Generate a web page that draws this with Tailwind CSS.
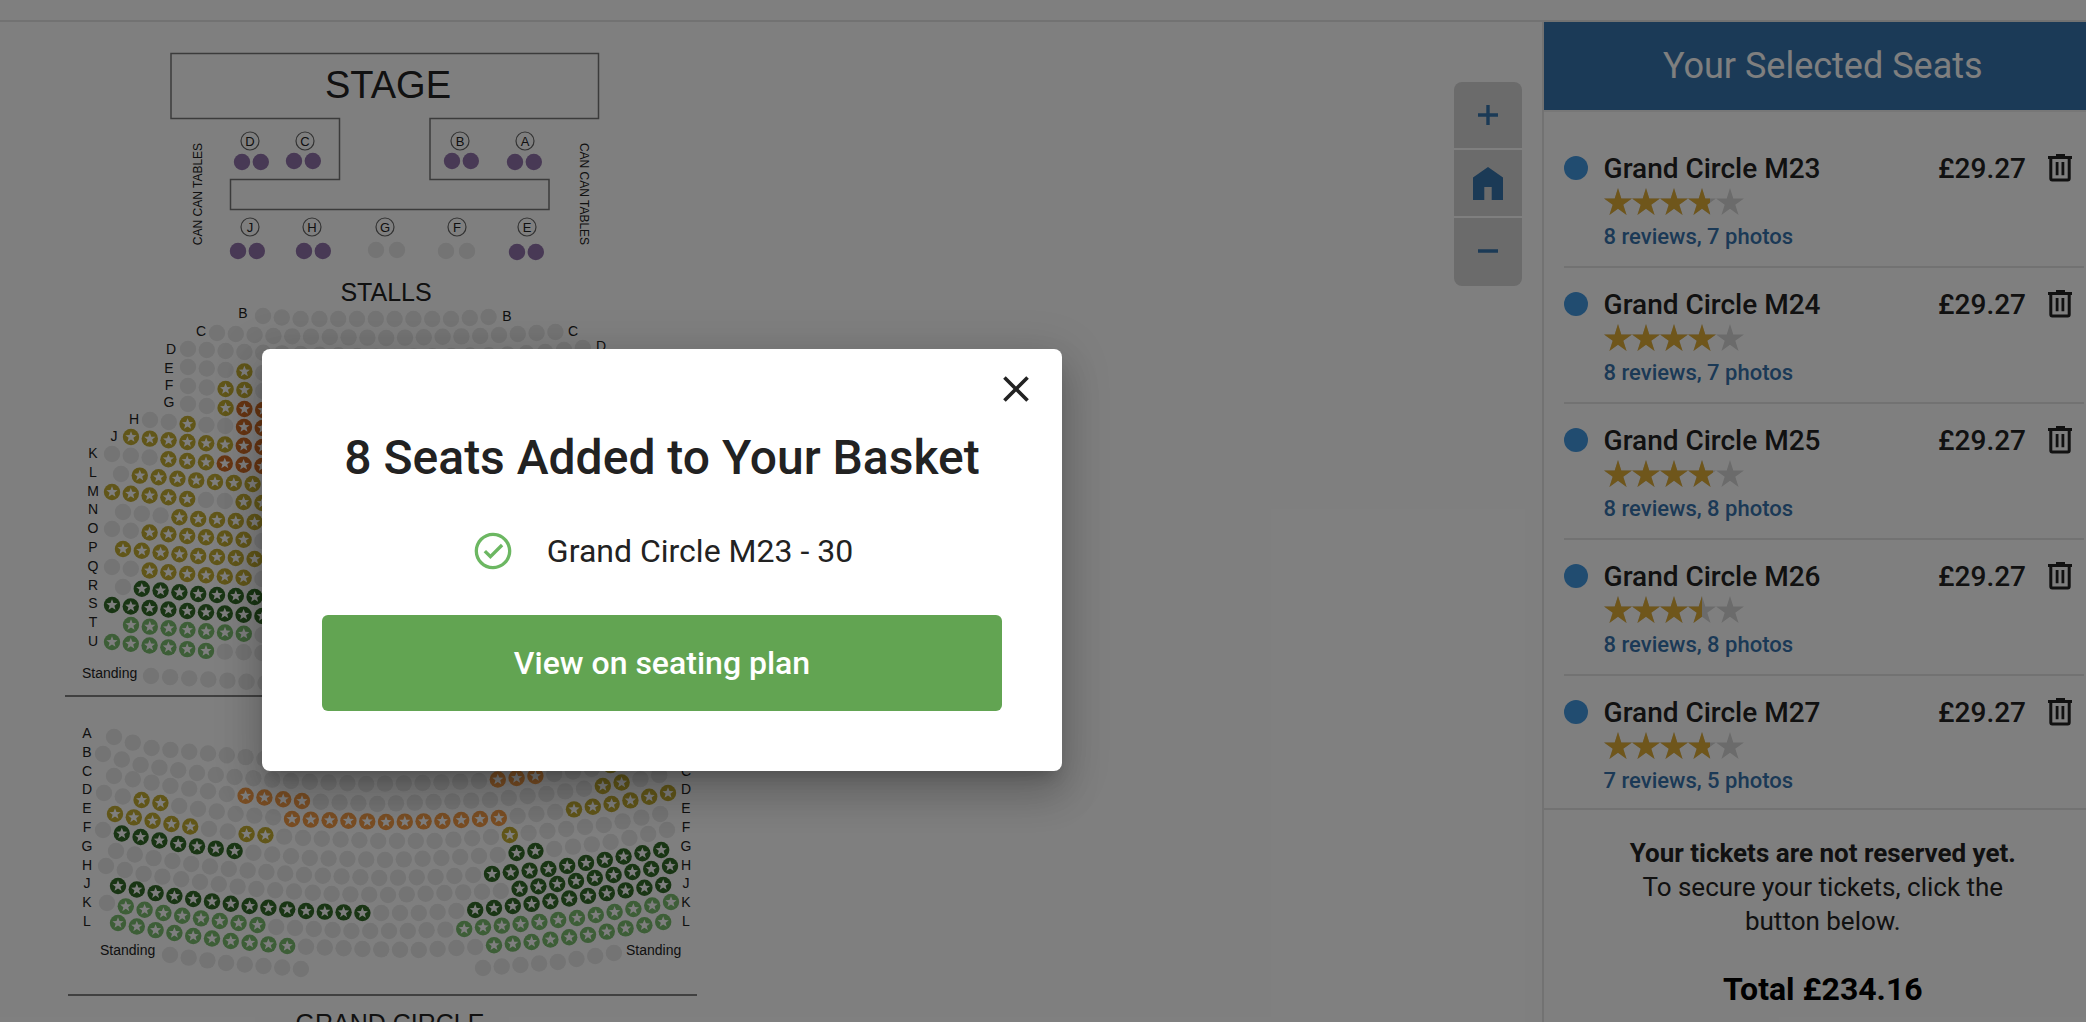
<!DOCTYPE html>
<html lang="en">
<head>
<meta charset="utf-8">
<title>Choose your seats</title>
<script src="https://cdn.jsdelivr.net/npm/@tailwindcss/browser@4"></script>
</head>
<body class="relative h-screen overflow-hidden bg-white font-['Roboto',sans-serif] text-[#222222]">

<svg class="hidden" aria-hidden="true">
  <symbol id="star" viewBox="0 0 28 28"><path d="M14 0l3.300 10.400H28l-8.700 6.300L22.600 27 14 20.700 5.400 27l3.300-10.300L0 10.400h10.700z"/></symbol>
  <symbol id="trash" viewBox="0 0 24 28"><path d="M8 0h9v2h7v3H0V2h8z"/><path d="M2.800 5v19.500q0 1.500 1.500 1.500h15.400q1.500 0 1.500-1.500V5" fill="none" stroke="currentColor" stroke-width="3"/><path d="M7.700 8h2.800v13.300H7.700zM13.500 8h2.800v13.300h-2.800z"/></symbol>
</svg>

<div class="flex h-full flex-col">
  <header class="h-[22px] shrink-0 border-b-2 border-[#e4e4e4]"></header>
  <div class="flex min-h-0 flex-1">

    <main class="relative min-w-0 flex-1 overflow-hidden">
      <svg id="plan" class="h-[1020px] w-[720px] font-['Liberation_Sans',sans-serif] text-sm" viewBox="0 22 720 1020" fill="#222222" role="img" aria-label="Seating plan">
        <path d="M171 53.500H598.500V118.500H430V179.500H549V209.500H230.500V179.500H339.500V118.500H171Z" fill="none" stroke="#777777" stroke-width="1.500"/>
        <path d="M65 696H695M68 995H697" stroke="#808080" stroke-width="2"/>
        <text x="388" y="98" text-anchor="middle" class="text-[38px]">STAGE</text>
        <text x="386" y="301" text-anchor="middle" class="text-[25px]">STALLS</text>
        <text x="390" y="1032" text-anchor="middle" class="text-[25px]">GRAND CIRCLE</text>
        <text transform="translate(202 194) rotate(-90)" text-anchor="middle" class="text-xs">CAN CAN TABLES</text>
        <text transform="translate(580 194) rotate(90)" text-anchor="middle" class="text-xs">CAN CAN TABLES</text>
        <text x="82" y="678">Standing</text>
        <text x="100" y="955">Standing</text>
        <text x="626" y="955">Standing</text>
      </svg>

      <div class="absolute right-5 top-[60px] flex w-[68px] flex-col gap-0.5 overflow-hidden rounded-lg text-[#3674ac]">
        <button aria-label="Zoom in" class="flex h-[66px] items-center justify-center bg-[#d6d6d6]"><svg width="20" height="20" fill="currentColor"><path d="M8.300 0h3.400v8.300H20v3.400h-8.300V20H8.300v-8.300H0V8.300h8.300z"/></svg></button>
        <button aria-label="Reset view" class="flex h-[66px] items-center justify-center bg-[#d6d6d6]"><svg width="30" height="33" fill="currentColor"><path d="M15 0L30 10.500V33H18.700V20H11.300V33H0V10.500z"/></svg></button>
        <button aria-label="Zoom out" class="flex h-[68px] items-center justify-center bg-[#d6d6d6]"><svg width="20" height="20" fill="currentColor"><path d="M0 7.300h20v3.400H0z"/></svg></button>
      </div>
    </main>

    <aside class="flex w-[26.1%] min-w-[480px] flex-col border-l-2 border-[#e4e4e4]">
      <h2 class="flex h-[90px] shrink-0 items-center justify-center border-b-2 border-[#eeeeee] bg-[#3674ae] bg-clip-padding pl-4 text-4xl text-white">Your Selected Seats</h2>
      <ul id="seats" class="h-[696px] shrink-0 overflow-hidden pl-5 pr-0.5 pt-5"></ul>
      <div class="border-t-2 border-[#e4e4e4] pl-[72px] pr-14 pt-[26px] text-center text-[26px] leading-[34px]">
        <p><strong class="font-bold">Your tickets are not reserved yet.</strong><br>To secure your tickets, click the button below.</p>
        <p class="mt-8 text-[32px] font-bold leading-[38px] text-black">Total £234.16</p>
      </div>
    </aside>
  </div>
</div>

<div class="absolute inset-0 bg-black/50 pl-[262px] pt-[349px]">
  <section role="dialog" aria-modal="true" aria-labelledby="dialog-title" class="relative w-[800px] rounded-lg bg-white px-[60px] pb-[60px] pt-20 text-center shadow-[0_11px_15px_-7px_rgba(0,0,0,0.2),0_24px_38px_3px_rgba(0,0,0,0.14),0_9px_46px_8px_rgba(0,0,0,0.12)]">
    <button aria-label="Close" class="absolute right-6 top-[18px]"><svg class="size-11" viewBox="0 0 24 24" fill="currentColor"><path d="M19 6.410 17.590 5 12 10.590 6.410 5 5 6.410 10.590 12 5 17.590 6.410 19 12 13.410 17.590 19 19 17.590 13.410 12z"/></svg></button>
    <h1 id="dialog-title" class="text-5xl/[58px] font-medium">8 Seats Added to Your Basket</h1>
    <p class="mt-[42px] flex h-11 items-center justify-center gap-8 text-[32px]">
      <svg class="size-11" viewBox="0 0 24 24" fill="#6cb762" aria-hidden="true"><path d="M12 2C6.480 2 2 6.480 2 12s4.480 10 10 10 10-4.480 10-10S17.520 2 12 2zm0 18.200c-4.520 0-8.200-3.680-8.200-8.200S7.480 3.800 12 3.800s8.200 3.680 8.200 8.200-3.680 8.200-8.200 8.200zM16.300 8.100l-5.700 5.700-2.400-2.400-1.300 1.300 3.700 3.600 7-6.900z"/></svg>
      <span>Grand Circle M23 - 30</span>
    </p>
    <button class="mt-[42px] h-24 w-full rounded-md bg-[#62a452] text-[32px] font-medium text-white">View on seating plan</button>
  </section>
</div>

<script>
const basket = [
  ['M23', '8 reviews, 7 photos', 76], ['M24', '8 reviews, 7 photos', 80],
  ['M25', '8 reviews, 8 photos', 78], ['M26', '8 reviews, 8 photos', 70],
  ['M27', '7 reviews, 5 photos', 76]
];
const five = '<svg class="size-7 shrink-0"><use href="#star"/></svg>'.repeat(5);
document.getElementById('seats').innerHTML = basket.map(([seat, reviews, score]) => `
  <li class="flex h-[136px] items-start border-b-2 border-[#e4e4e4] pt-5">
    <span class="mt-1 size-6 shrink-0 rounded-full bg-[#4398e0]"></span>
    <div class="ml-4 flex-1">
      <h3 class="text-[28px] font-medium leading-[34px]">Grand Circle ${seat}</h3>
      <div class="relative mt-0.5 w-[140px] fill-[#d6d6d6]" role="img" aria-label="Rating ${score}%">
        <div class="flex">${five}</div>
        <div class="absolute inset-y-0 left-0 flex overflow-hidden fill-[#dfac36]" style="width:${score}%">${five}</div>
      </div>
      <a href="#" class="mt-1.5 block text-[22px] font-medium leading-[30px] text-[#3672ac]">${reviews}</a>
    </div>
    <span class="text-[28px] font-medium leading-[34px]">£29.27</span>
    <button aria-label="Remove seat ${seat}" class="ml-[22px] mr-3 mt-0.5"><svg class="h-7 w-6 fill-current"><use href="#trash"/></svg></button>
  </li>`).join('');

// Seat codes: g unavailable, y/o/a/d/l price bands, p can can table, each followed by a run length.
const colours = {g:'#e8e8e8', y:'#c2ac32', o:'#d06c26', a:'#f49c48', d:'#326a28', l:'#7abc6e', p:'#9072aa'};
// [first x, run-length seats, curve as x,y pairs, pitch]
const rows = [
  [263,'g13',[263,316,300,319,386,319,450,319,488,317]],
  [217,'g19',[217,333,274,336,386,338,480,336,555,332]],
  [188,'g22',[188,349,244,352,386,357,500,355,545,352,583,348]],
  [188,'g3y1g1',[188,367,263,373]],
  [188,'g2y2g1',[188,386,225,389,263,391]],
  [188,'g2y1o2',[188,404,225,408,263,410]],
  [150,'g2y1g2o2',[150,420,188,424,263,428]],
  [131,'y6o2',[131,437,188,442,263,447]],
  [112,'g3y3o3',[112,454,188,461,263,466]],
  [121,'g1y7',[121,474,215,482,253,484]],
  [112,'y5g2y2',[112,492,188,499,263,503]],
  [123,'g3y5',[123,512,198,519,254,522]],
  [112,'g2y6g1',[112,529,188,536,263,541]],
  [123,'y8',[123,549,198,556,254,559]],
  [112,'g2y6g1',[112,567,188,574,263,579]],
  [123,'g1d7',[123,587,198,594,254,597]],
  [112,'d9',[112,605,188,611,263,616]],
  [131,'l7g1',[131,625,188,630,263,635]],
  [112,'l6g3',[112,642,207,651,263,653]],
  [151,'g7',[151,676,266,683],19.1],
  [114,'g9',[114,737,151,748,265,759]],
  [103,'g21a3g3y1',[103,754,141,765,197,773,235,777,291,781,366,784,423,783,479,781,516,778,554,774,592,769,611,765]],
  [114,'g7a4g15y2g2',[114,776,171,786,227,794,302,801,377,804,434,802,490,800,547,794,603,786,641,779,660,775]],
  [104,'g2y2g6a12g3y6',[104,793,142,800,198,809,236,814,292,819,386,822,443,821,499,818,555,812,612,804,668,793]],
  [115,'y5g2y2g12y1g8',[115,814,171,824,247,834,303,838,378,841,434,841,491,837,547,831,604,825,660,814]],
  [103,'g1d7g14d2g7',[103,830,141,837,178,844,235,851,310,858,385,860,442,858,498,855,554,849,611,842,667,830]],
  [116,'g20d10',[116,851,153,858,191,864,229,869,304,875,379,878,435,877,491,874,548,869,604,860,661,850]],
  [106,'g22d9',[106,866,144,874,200,882,257,889,332,894,388,895,445,893,501,891,557,884,614,875,670,866]],
  [118,'d14g5d11',[118,886,155,893,193,899,249,906,306,911,362,913,418,913,475,910,531,904,587,896,663,885]],
  [107,'g1l8g10l12',[107,903,163,913,220,921,276,927,351,931,407,931,464,929,520,924,577,918,633,909,671,902]],
  [118,'l10g10l10',[118,923,155,930,193,936,230,941,287,946,362,949,418,950,475,947,531,942,587,935,663,922]],
  [170,'g8',[170,955,226,963,301,969],18.7],
  [483,'g8',[483,968,558,962,614,953],18.7],
  [242,'p2',[242,162]],[294,'p2',[294,161]],[452,'p2',[452,161]],[515,'p2',[515,162]],
  [238,'p2',[238,251]],[304,'p2',[304,251]],[376,'g2',[376,250],21],[446,'g2',[446,251],21],[517,'p2',[517,252]]
];
const yAt = (c, x) => {
  for (let i = 2; i < c.length; i += 2)
    if (x <= c[i]) return c[i-1] + (c[i+1] - c[i-1]) * (x - c[i-2]) / (c[i] - c[i-2]);
  return c[c.length - 1];
};
const starPath = 'M0-5.800 1.500-2 5.600-1.800 2.400.800 3.500 4.800 0 2.500-3.500 4.800-2.400.800-5.600-1.800-1.500-2Z';
let out = '';
for (const [x0, runs, curve, pitch = 18.8] of rows) {
  let i = 0;
  for (const [, code, n] of runs.matchAll(/([a-z])(\d+)/g))
    for (let k = 0; k < +n; k++, i++) {
      const x = x0 + i * pitch, y = yAt(curve, x);
      out += `<circle cx="${x}" cy="${y}" r="8.200" fill="${colours[code]}"/>`;
      if (code !== 'g' && code !== 'p') out += `<path d="${starPath}" transform="translate(${x} ${y})" fill="#fff"/>`;
    }
}
// Row letters: [letter, centre x, baseline]
const letters = [['B',243,318],['C',201,336],['D',171,354],['E',169,373],['F',169,390],['G',169,407],['H',134,424],['J',114,441],
  ['B',507,321],['C',573,336],['D',601,351]];
'KLMNOPQRSTU'.split('').forEach((l, i) => letters.push([l, 93, 458 + i * 18.8]));
'ABCDEFGHJKL'.split('').forEach((l, i) => {
  letters.push([l, 87, 738 + i * 18.8]);
  if (i > 1) letters.push([l, 686, 738 + i * 18.8]);
});
for (const [l, x, y] of [['D',250,141],['C',305,141],['B',460,141],['A',525,141],['J',250,227],['H',312,227],['G',385,227],['F',457,227],['E',527,227]]) {
  out += `<circle cx="${x}" cy="${y}" r="9" fill="none" stroke="#666" stroke-width="1.200"/>`;
  letters.push([l, x, y + 5, 'text-[13px]']);
}
for (const [l, x, y, c = 'text-sm'] of letters) out += `<text x="${x}" y="${y}" text-anchor="middle" class="${c}">${l}</text>`;
document.getElementById('plan').insertAdjacentHTML('beforeend', out);
</script>
</body>
</html>
